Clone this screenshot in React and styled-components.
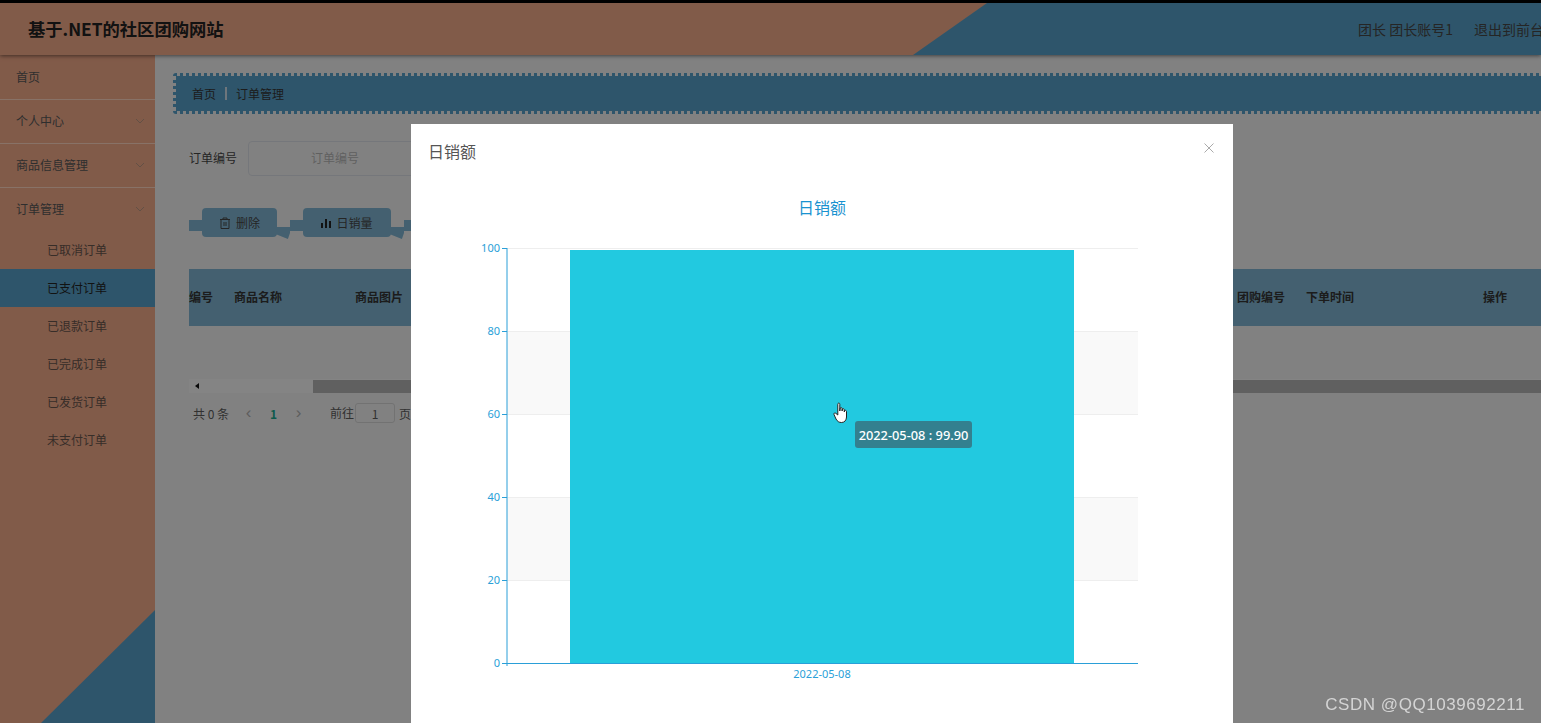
import React from 'react';
import styled, { createGlobalStyle } from 'styled-components';

const GlobalStyle = createGlobalStyle`
    html, body {
        margin: 0;
        height: 100%;
        overflow: hidden;
        background: #ececec;
        font-family: "Noto Sans CJK SC", "Liberation Sans", sans-serif;
    }
`;

const brown = '#eca686';
const blue = '#559cc3';
const faded = '#7cb0cc';

const Page = styled.div`
    height: 723px;
    display: flex;
    flex-direction: column;
    overflow: hidden;
    border-top: 3px solid #000;
    box-sizing: border-box;
`;

const Header = styled.header`
    position: relative;
    height: 52px;
    flex: none;
    display: flex;
    align-items: center;
    padding-left: 28px;
    background: ${blue};
    box-shadow: 0 1px 4px rgba(0, 0, 0, 0.5);
    z-index: 2;

    &::before {
        content: "";
        position: absolute;
        inset: 0;
        background: ${brown};
        clip-path: polygon(0 0, 987px 0, 913px 100%, 0 100%);
    }
`;

const Title = styled.h1`
    position: relative;
    margin: 0;
    font-size: 17.3px;
    line-height: 24px;
    font-weight: 700;
    color: #222;
`;

const HeaderNav = styled.div`
    position: relative;
    margin-left: auto;
    margin-right: -3px;
    display: flex;
    gap: 21px;
    font-size: 14px;
    color: #444;
    white-space: nowrap;
`;

const Body = styled.div`
    flex: 1;
    display: flex;
    min-height: 0;
`;

const Sidebar = styled.nav`
    position: relative;
    width: 155px;
    flex: none;
    padding-top: 1px;
    background: ${brown};

    &::after {
        content: "";
        position: absolute;
        right: 0;
        bottom: 0;
        width: 114px;
        height: 113px;
        background: ${blue};
        clip-path: polygon(100% 0, 100% 100%, 0 100%);
    }
`;

const MenuItem = styled.div`
    height: ${p => (p.$last ? 43 : 44)}px;
    box-sizing: border-box;
    display: flex;
    align-items: center;
    justify-content: space-between;
    padding: 0 10px 2px 16px;
    font-size: 12px;
    color: #555;
    border-bottom: ${p => (p.$last ? 'none' : '1px solid #f7cfbc')};
`;

const SubItem = styled.div`
    height: 38px;
    box-sizing: border-box;
    display: flex;
    align-items: center;
    padding: 0 0 2px 47px;
    font-size: 12px;
    color: ${p => (p.$active ? '#222' : '#64524a')};
    background: ${p => (p.$active ? blue : 'transparent')};
`;

const Chevron = styled.svg`
    width: 10px;
    height: 6px;
    fill: none;
    stroke: #b5927f;
    stroke-width: 1;
`;

const Main = styled.main`
    flex: 1;
    min-width: 0;
    padding: 18px 0 0 18px;
`;

const Crumbs = styled.div`
    height: 41px;
    box-sizing: border-box;
    display: flex;
    align-items: center;
    padding: 0 0 1px 16px;
    margin-right: -6px;
    background: ${blue};
    background-clip: padding-box;
    border: 3px dotted ${blue};
    border-radius: 3px;
    font-size: 12px;
    color: #333;
`;

const CrumbBar = styled.span`
    width: 2px;
    height: 13px;
    margin: 0 9px;
    background: #c8d8e2;
`;

const Content = styled.div`
    padding: 27px 0 0 16px;
`;

const FilterRow = styled.div`
    display: flex;
    align-items: center;
    gap: 11px;
    font-size: 12px;
    color: #444;
`;

const FilterLabel = styled.span`
    padding-bottom: 2px;
`;

const SearchBox = styled.div`
    width: 174px;
    height: 35px;
    box-sizing: border-box;
    display: flex;
    align-items: center;
    justify-content: center;
    padding-bottom: 2px;
    border: 1px solid #d6d9e0;
    border-radius: 4px;
    color: #b0b0b0;
`;

const ButtonRow = styled.div`
    display: flex;
    gap: 26px;
    margin-top: 32px;
    padding-left: 13px;
`;

const RibbonButton = styled.div`
    position: relative;
    width: ${p => p.$width}px;
    height: 29px;
    display: flex;
    align-items: center;
    justify-content: center;
    gap: 5px;
    border-radius: 4px;
    background: ${faded};
    font-size: 12px;
    color: #444;

    &::before {
        content: "";
        position: absolute;
        left: -13px;
        top: 12px;
        width: 13px;
        height: 11px;
        background: ${faded};
    }

    &::after {
        content: "";
        position: absolute;
        right: -13px;
        top: 19px;
        width: 14px;
        height: 12px;
        background: ${faded};
        clip-path: polygon(0 0, 100% 0, 100% 50%, 85% 100%, 0 60%);
    }
`;

const TableHead = styled.div`
    display: flex;
    align-items: center;
    height: 57px;
    box-sizing: border-box;
    padding-bottom: 2px;
    margin-top: 32px;
    background: ${faded};
    font-size: 12px;
    font-weight: 700;
    color: #333;
    white-space: nowrap;
`;

const HeadCell = styled.div`
    width: ${p => p.$width}px;
    flex: none;
`;

const ScrollBar = styled.div`
    display: flex;
    align-items: center;
    height: 14px;
    margin-top: 53px;
    background: #f1f1f1;
`;

const ScrollArrow = styled.div`
    width: 124px;
    flex: none;
    padding-left: 6px;
    box-sizing: border-box;

    &::before {
        content: "";
        display: block;
        width: 0;
        border-style: solid;
        border-width: 3px 4px 3px 0;
        border-color: transparent #111 transparent transparent;
    }
`;

const ScrollThumb = styled.div`
    flex: 1;
    height: 13px;
    background: #b0b0b0;
`;

const Pager = styled.div`
    display: flex;
    align-items: center;
    height: 20px;
    margin-top: 10px;
    padding-left: 4px;
    font-size: 12px;
    color: #5a5a5a;
`;

const PagerArrow = styled.span`
    width: 25px;
    margin-left: ${p => p.$gap || 0}px;
    text-align: center;
    font-family: "Liberation Sans", sans-serif;
    font-size: 17px;
    line-height: 16px;
    color: #aaa;
`;

const PagerNum = styled.span`
    width: 25px;
    text-align: center;
    font-weight: 700;
    color: #1aa48a;
`;

const PagerLabel = styled.span`
    margin-left: 19px;
    padding-bottom: 1px;
`;

const PagerInput = styled.span`
    width: 38px;
    height: 18px;
    margin: 0 4px 0 1px;
    display: flex;
    align-items: center;
    justify-content: center;
    border: 1px solid #cfcfcf;
    border-radius: 3px;
`;

const Overlay = styled.div`
    position: fixed;
    inset: 0;
    background: rgba(0, 0, 0, 0.45);
    z-index: 5;
`;

const Modal = styled.div`
    position: absolute;
    left: 411px;
    top: 124px;
    width: 822px;
    height: 640px;
    background: #fff;
`;

const ModalHead = styled.div`
    display: flex;
    justify-content: space-between;
    box-sizing: border-box;
    padding: 17px 19px 0 17px;
    height: 40px;
    font-size: 16px;
    line-height: 20px;
    color: #555;
`;

const CloseIcon = styled.svg`
    width: 10px;
    height: 10px;
    margin-top: 2px;
    stroke: #aaa;
    stroke-width: 1;
`;

const ChartWrap = styled.div`
    position: relative;
    width: 822px;
    height: 560px;
`;

const Tooltip = styled.div`
    position: absolute;
    left: 444px;
    top: 257px;
    height: 27px;
    width: 117px;
    display: flex;
    align-items: center;
    justify-content: center;
    border-radius: 3px;
    background: #33808f;
    color: #fff;
    font-family: "Noto Sans", sans-serif;
    font-size: 12.8px;
    font-weight: 500;
    white-space: nowrap;
`;

const HandCursor = styled.svg`
    position: absolute;
    left: 422px;
    top: 238px;
    width: 16px;
    height: 22px;
`;

const Watermark = styled.div`
    position: fixed;
    right: 16px;
    bottom: 8px;
    z-index: 6;
    font-family: "Liberation Sans", sans-serif;
    font-size: 17px;
    letter-spacing: 0.55px;
    color: #d4d4d4;
    white-space: nowrap;
`;

const ChevronDown = () => (
    <Chevron viewBox="0 0 10 6"><path d="M1 1l4 4 4-4" /></Chevron>
);

const columns = [
    ['编号', 45],
    ['商品名称', 121],
    ['商品图片', 882],
    ['团购编号', 69],
    ['下单时间', 177],
    ['操作', 60],
];

const subMenu = ['已取消订单', '已支付订单', '已退款订单', '已完成订单', '已发货订单', '未支付订单'];

// chart is offset by the modal head: svg y = page y - 164, svg x = page x - 411
const axisColor = '#2a9fd8';
const ticks = [0, 20, 40, 60, 80, 100];

const SalesChart = () => (
    <svg width="822" height="560" style={{ display: 'block' }}>
        <text x="411" y="50" textAnchor="middle" fontSize="16" fill="#1a92cf" fontFamily="Noto Sans CJK SC, sans-serif">日销额</text>
        <rect x="96" y="167" width="631" height="83" fill="#f9f9f9" />
        <rect x="96" y="333" width="631" height="83" fill="#f9f9f9" />
        {ticks.map(t => {
            const y = 499 - t * 4.15 + 0.5;
            return (
                <g key={t}>
                    <line x1="96" x2="727" y1={y} y2={y} stroke="#eee" />
                    <line x1="91" x2="96" y1={y} y2={y} stroke={axisColor} />
                    <text x="89" y={y + 3} textAnchor="end" fontSize="11" fill={axisColor} fontFamily="Noto Sans, sans-serif">{t}</text>
                </g>
            );
        })}
        <rect x="159" y="86" width="504" height="413" fill="#22c9e0" />
        <line x1="96" x2="96" y1="84" y2="502" stroke={axisColor} />
        <line x1="91" x2="727" y1="499.5" y2="499.5" stroke={axisColor} />
        <text x="411" y="514" textAnchor="middle" fontSize="11" fill={axisColor} fontFamily="Noto Sans, sans-serif">2022-05-08</text>
    </svg>
);

class App extends React.PureComponent {
    render() {
        return (
            <Page>
                <GlobalStyle />
                <Header>
                    <Title>基于.NET的社区团购网站</Title>
                    <HeaderNav>
                        <span>团长 团长账号1</span>
                        <span>退出到前台</span>
                    </HeaderNav>
                </Header>
                <Body>
                    <Sidebar>
                        <MenuItem>首页</MenuItem>
                        <MenuItem>个人中心<ChevronDown /></MenuItem>
                        <MenuItem>商品信息管理<ChevronDown /></MenuItem>
                        <MenuItem $last>订单管理<ChevronDown /></MenuItem>
                        {subMenu.map((name, i) => (
                            <SubItem key={name} $active={i === 1}>{name}</SubItem>
                        ))}
                    </Sidebar>
                    <Main>
                        <Crumbs>
                            首页<CrumbBar />订单管理
                        </Crumbs>
                        <Content>
                            <FilterRow>
                                <FilterLabel>订单编号</FilterLabel>
                                <SearchBox>订单编号</SearchBox>
                            </FilterRow>
                            <ButtonRow>
                                <RibbonButton $width={75}>
                                    <svg width="12" height="12" viewBox="0 0 12 12" fill="none" stroke="#444">
                                        <path d="M1 2.500h10M4 2.500V1h4v1.500M2 2.500v9h8v-9M5 5v4M7 5v4" />
                                    </svg>
                                    删除
                                </RibbonButton>
                                <RibbonButton $width={88}>
                                    <svg width="10" height="10" viewBox="0 0 10 10" fill="#222">
                                        <path d="M0 5h2v5H0zM4 1h2v9H4zM8 3h2v7H8z" />
                                    </svg>
                                    日销量
                                </RibbonButton>
                                <RibbonButton $width={88}>月销额</RibbonButton>
                            </ButtonRow>
                            <TableHead>
                                {columns.map(([name, width]) => (
                                    <HeadCell key={name} $width={width}>{name}</HeadCell>
                                ))}
                            </TableHead>
                            <ScrollBar>
                                <ScrollArrow />
                                <ScrollThumb />
                            </ScrollBar>
                            <Pager>
                                共 0 条
                                <PagerArrow $gap={7}>‹</PagerArrow>
                                <PagerNum>1</PagerNum>
                                <PagerArrow>›</PagerArrow>
                                <PagerLabel>前往</PagerLabel>
                                <PagerInput>1</PagerInput>
                                页
                            </Pager>
                        </Content>
                    </Main>
                </Body>
                <Overlay>
                    <Modal>
                        <ModalHead>
                            日销额
                            <CloseIcon viewBox="0 0 10 10"><path d="M0.500 0.500l9 9M9.500 0.500l-9 9" /></CloseIcon>
                        </ModalHead>
                        <ChartWrap>
                            <SalesChart />
                            <HandCursor viewBox="0 0 16 22">
                                <path
                                    d="M5 1.500c.8-.8 1.800-.4 1.800.8V9l.4-3c1-.8 1.900-.3 1.900.6V9l.3-2c1-.6 1.900 0 1.900.8V10l.3-1.500c1-.5 1.900 0 1.900 1V15c0 3-1.800 5.500-5 5.500-2.500 0-4-1-5.500-3.500L1 12.500c-.5-1.200.8-2 1.800-1.200L4.800 13V2.500z"
                                    fill="#fff"
                                    stroke="#222"
                                />
                            </HandCursor>
                            <Tooltip>2022-05-08 : 99.90</Tooltip>
                        </ChartWrap>
                    </Modal>
                </Overlay>
                <Watermark>CSDN @QQ1039692211</Watermark>
            </Page>
        );
    }
}

export default App;
